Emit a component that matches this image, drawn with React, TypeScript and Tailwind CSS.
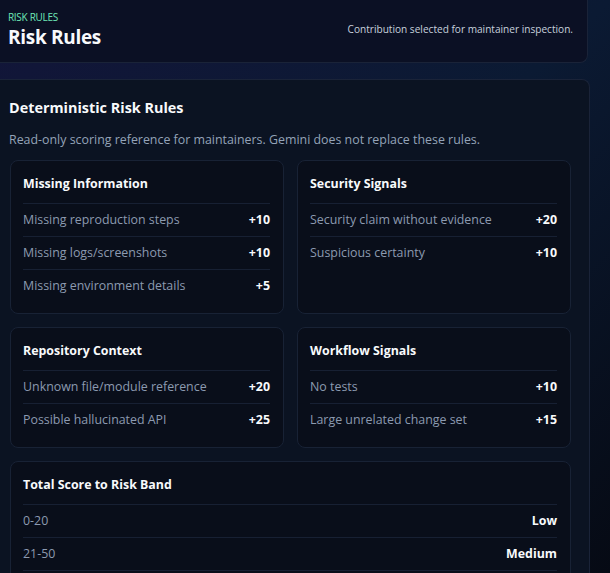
import React from "react";

type Row = { label: string; value: string };

const groups: { title: string; rows: Row[] }[] = [
  {
    title: "Missing Information",
    rows: [
      { label: "Missing reproduction steps", value: "+10" },
      { label: "Missing logs/screenshots", value: "+10" },
      { label: "Missing environment details", value: "+5" },
    ],
  },
  {
    title: "Security Signals",
    rows: [
      { label: "Security claim without evidence", value: "+20" },
      { label: "Suspicious certainty", value: "+10" },
    ],
  },
  {
    title: "Repository Context",
    rows: [
      { label: "Unknown file/module reference", value: "+20" },
      { label: "Possible hallucinated API", value: "+25" },
    ],
  },
  {
    title: "Workflow Signals",
    rows: [
      { label: "No tests", value: "+10" },
      { label: "Large unrelated change set", value: "+15" },
    ],
  },
];

const bands: Row[] = [
  { label: "0-20", value: "Low" },
  { label: "21-50", value: "Medium" },
  { label: "51-100", value: "High" },
];

function RuleCard({ title, rows }: { title: string; rows: Row[] }) {
  return (
    <div className="rounded-[8px] border border-[#182235] bg-[#090e1a] pl-[12px] pr-[13px] pt-[14px] pb-[10px]">
      <div className="text-[12.4px] font-bold leading-[18px] text-[#f8fafc] pb-[10px] border-b border-[#172033]">
        {title}
      </div>
      {rows.map((r, i) => (
        <div
          key={r.label}
          className={`flex items-center justify-between h-[33px] text-[12.4px] ${
            i < rows.length - 1 ? "border-b border-[#172033]" : ""
          }`}
        >
          <span className="text-[#8c9ab0]">{r.label}</span>
          <span className="font-bold text-[#f8fafc]">{r.value}</span>
        </div>
      ))}
    </div>
  );
}

export default function App() {
  return (
    <div
      className="h-screen w-full overflow-hidden bg-gradient-to-br from-[#121539] via-[#0b1a33] to-[#060a14] text-white"
      style={{ fontFamily: '"Open Sans", "Noto Sans", sans-serif' }}
    >
      <div className="w-[590px] flex flex-col gap-[16px]">
        <div className="h-[63px] w-[588px] rounded-br-[8px] border-r border-b border-[#1a2338] bg-[#0b1024] flex items-start justify-between pl-[8px] pr-[14px]">
          <div className="pt-[10px]">
            <div className="text-[10px] leading-[14px] text-[#6ee7b7] tracking-[-0.3px]">RISK RULES</div>
            <div className="text-[19px] font-bold leading-[26px] text-[#f8fafc] tracking-[-0.3px]">Risk Rules</div>
          </div>
          <div className="pt-[21px] text-[10.1px] leading-[16px] text-[#c7d0dd]">
            Contribution selected for maintainer inspection.
          </div>
        </div>

        <div className="rounded-tr-[8px] border-r border-t border-[#1a2338] bg-[#0b1322] pl-[10px] pr-[18px] pt-[17px] pb-[20px]">
          <div className="-ml-[1px] text-[14.4px] font-bold leading-[22px] text-[#f8fafc]">Deterministic Risk Rules</div>
          <div className="-ml-[1px] mt-[11px] text-[12.4px] leading-[20px] text-[#94a3b8]">
            Read-only scoring reference for maintainers. Gemini does not replace these rules.
          </div>
          <div className="mt-[10px] grid grid-cols-2 gap-[13px]">
            {groups.map((g) => (
              <RuleCard key={g.title} title={g.title} rows={g.rows} />
            ))}
            <div className="col-span-2">
              <RuleCard title="Total Score to Risk Band" rows={bands} />
            </div>
          </div>
        </div>
      </div>
    </div>
  );
}
